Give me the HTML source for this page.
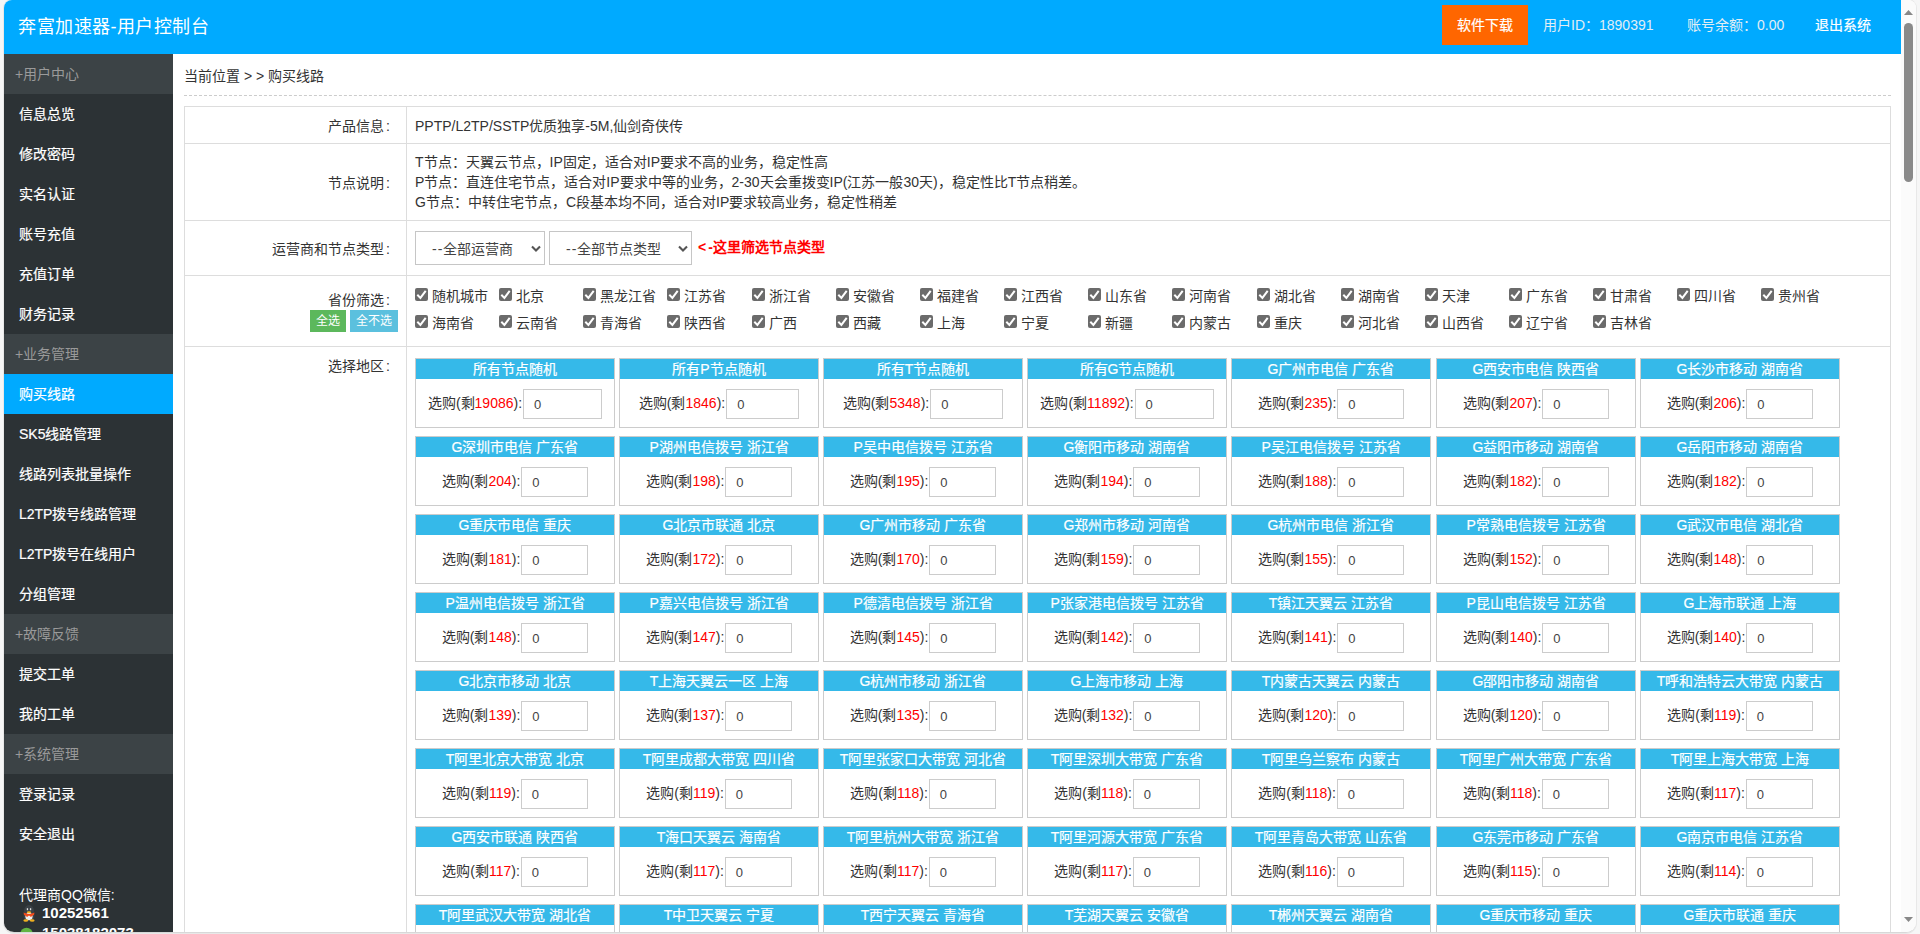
<!DOCTYPE html><html lang="zh-CN"><head><meta charset="utf-8"><style>
*{box-sizing:border-box}
html,body{margin:0;padding:0;width:1920px;height:934px;overflow:hidden;background:#f6f6f6;font-family:"Liberation Sans",sans-serif;font-size:14px;color:#333}
.win{position:absolute;left:4px;top:0;width:1912px;height:933px;border-radius:8px 8px 10px 10px;overflow:hidden;background:#fff;border-bottom:1px solid #d8d8d8;box-shadow:0 0 0 1px #e8e8e8}
.hdr{position:absolute;left:0;top:0;width:1897px;height:54px;background:#00aaff;color:#fff}
.title{position:absolute;left:14px;top:14px;font-size:18px;letter-spacing:0.5px;line-height:26px;white-space:nowrap}
.dl{position:absolute;left:1438px;top:5px;width:86px;height:40px;background:#ff6600;color:#fff;font-size:14px;line-height:41px;text-align:center;-webkit-text-stroke:0.2px #fff}
.hi{position:absolute;top:6px;line-height:39px;font-size:14px;color:#e2eef4;white-space:nowrap}
.sb{position:absolute;left:1897px;top:0;width:15px;height:932px;background:#fbfbfb}
.thumb{position:absolute;left:3px;top:23px;width:9px;height:159px;border-radius:5px;background:#8a8a8a}
.side{position:absolute;left:0;top:54px;width:169px;height:878px;background:#2c3235}
.mi{height:40px;line-height:40px;padding-left:15px;color:#fff;font-size:14px;white-space:nowrap;-webkit-text-stroke:0.2px #fff}
.mg{background:#3c4346;color:#9a9a9a;padding-left:11px;-webkit-text-stroke:0}
.ma{background:#00aaff}
.crumb{position:absolute;left:180px;top:66px;font-size:14px;line-height:20px;white-space:nowrap}
.dash{position:absolute;left:180px;top:95px;width:1707px;border-top:1px dashed #ccc}
table.t{position:absolute;left:180px;top:106px;width:1707px;border-collapse:collapse}
table.t td{border:1px solid #ddd;padding:0;vertical-align:middle}
td.lb{width:222px;text-align:right;padding-right:16px!important}
.card{position:absolute;width:200px;height:70px;border:1px solid #ccc;background:#fff}
.ch{height:20px;line-height:20px;background:#35b9e9;color:#fff;text-align:center;font-size:14px;white-space:nowrap;-webkit-text-stroke:0.2px #fff}
.cb{position:absolute;top:30px;left:0;width:198px;text-align:center;white-space:nowrap;font-size:14px}
.cb span{color:#f00}
.inp{display:inline-block;vertical-align:middle;height:30px;border:1px solid #ccc;text-align:left;padding-left:10px;line-height:30px;font-size:13px;margin-left:1px;color:#444}
.sel{position:absolute;height:34px;border:1px solid #c6c6c6;background:#fff;font-size:14px;line-height:34px;padding-left:16px;white-space:nowrap;color:#444}
.arr{position:absolute;right:2px;top:13px}
.btn{position:absolute;height:22px;line-height:23px;color:#fff;font-size:12px;text-align:center}
.ck{position:absolute;white-space:nowrap;font-size:14px}
.ck i{display:inline-block;width:13px;height:13px;background:#6b6b6b;border-radius:2px;vertical-align:0px;margin-right:4px;position:relative}
</style></head><body><div class="win">

<div class="hdr"><div class="title">奔富加速器-用户控制台</div><div class="dl">软件下载</div><div class="hi" style="left:1539px">用户ID：1890391</div><div class="hi" style="left:1683px">账号余额：0.00</div><div class="hi" style="left:1811px;color:#fff;-webkit-text-stroke:0.2px #fff">退出系统</div></div>
<div class="sb"><div class="thumb"></div><svg width="15" height="932" style="position:absolute;left:0;top:0"><path d="M3 15L7.5 10L12 15Z" fill="#888"/><path d="M3 917L7.5 922L12 917Z" fill="#888"/></svg></div>
<div class="side">
<div class="mi mg">+用户中心</div>
<div class="mi">信息总览</div>
<div class="mi">修改密码</div>
<div class="mi">实名认证</div>
<div class="mi">账号充值</div>
<div class="mi">充值订单</div>
<div class="mi">财务记录</div>
<div class="mi mg">+业务管理</div>
<div class="mi ma">购买线路</div>
<div class="mi">SK5线路管理</div>
<div class="mi">线路列表批量操作</div>
<div class="mi">L2TP拨号线路管理</div>
<div class="mi">L2TP拨号在线用户</div>
<div class="mi">分组管理</div>
<div class="mi mg">+故障反馈</div>
<div class="mi">提交工单</div>
<div class="mi">我的工单</div>
<div class="mi mg">+系统管理</div>
<div class="mi">登录记录</div>
<div class="mi">安全退出</div>
<div style="position:absolute;left:15px;top:831px;color:#fff;font-size:14px;line-height:20px;white-space:nowrap">代理商QQ微信:</div>
<svg width="14" height="17" viewBox="0 0 14 17" style="position:absolute;left:18px;top:851px"><ellipse cx="7" cy="6" rx="5" ry="6" fill="#3a4146"/><ellipse cx="7" cy="11" rx="5.5" ry="5" fill="#3a4146"/><ellipse cx="7" cy="11.5" rx="3.6" ry="3.8" fill="#eee"/><rect x="4.8" y="3.2" width="1.3" height="2" fill="#ddd"/><rect x="7.9" y="3.2" width="1.3" height="2" fill="#ddd"/><path d="M1.5 7.6Q7 10.5 12.5 7.6L12 10Q10 10.5 9 12L7 10.5L5 12Q4 10.5 2 10Z" fill="#f04a1a"/><ellipse cx="7" cy="7.3" rx="2.2" ry="1" fill="#f5b820"/><ellipse cx="3.8" cy="15.5" rx="2.4" ry="1.3" fill="#f0b020"/><ellipse cx="10.2" cy="15.5" rx="2.4" ry="1.3" fill="#f0b020"/></svg><svg width="14" height="14" viewBox="0 0 14 14" style="position:absolute;left:16px;top:873px"><circle cx="6.5" cy="7" r="6.3" fill="#62b543"/><circle cx="4.5" cy="6" r="0.9" fill="#2d3236"/><circle cx="8.5" cy="6" r="0.9" fill="#2d3236"/></svg>
<div style="position:absolute;left:38px;top:849px;color:#fff;font-size:15px;line-height:20px;font-weight:bold">10252561</div>
<div style="position:absolute;left:38px;top:869px;color:#fff;font-size:15px;line-height:20px;font-weight:bold">15038182073</div>
</div>
<div class="crumb">当前位置 &gt; &gt; 购买线路</div><div class="dash"></div>
<table class="t"><tr style="height:37px"><td class="lb">产品信息<span style="margin-left:2.5px">:</span></td><td style="padding-left:8px">PPTP/L2TP/SSTP优质独享-5M,仙剑奇侠传</td></tr><tr style="height:77px"><td class="lb">节点说明<span style="margin-left:2.5px">:</span></td><td style="padding-left:8px;line-height:20px">T节点：天翼云节点，IP固定，适合对IP要求不高的业务，稳定性高<br>P节点：直连住宅节点，适合对IP要求中等的业务，2-30天会重拨变IP(江苏一般30天)，稳定性比T节点稍差。<br>G节点：中转住宅节点，C段基本均不同，适合对IP要求较高业务，稳定性稍差</td></tr><tr style="height:55px"><td class="lb">运营商和节点类型<span style="margin-left:2.5px">:</span></td><td></td></tr><tr style="height:71px"><td class="lb" style="vertical-align:top;padding-top:14px;line-height:20px">省份筛选<span style="margin-left:2.5px">:</span></td><td></td></tr><tr style="height:700px"><td class="lb" style="vertical-align:top;padding-top:9px;line-height:20px">选择地区<span style="margin-left:2.5px">:</span></td><td></td></tr></table>
<div class="card" style="left:411px;top:358px"><div class="ch">所有节点随机</div><div class="cb">选购(剩<span>19086</span>):<div class="inp" style="width:79px">0</div></div></div>
<div class="card" style="left:615px;top:358px"><div class="ch">所有P节点随机</div><div class="cb">选购(剩<span>1846</span>):<div class="inp" style="width:73px">0</div></div></div>
<div class="card" style="left:819px;top:358px"><div class="ch">所有T节点随机</div><div class="cb">选购(剩<span>5348</span>):<div class="inp" style="width:73px">0</div></div></div>
<div class="card" style="left:1023px;top:358px"><div class="ch">所有G节点随机</div><div class="cb">选购(剩<span>11892</span>):<div class="inp" style="width:79px">0</div></div></div>
<div class="card" style="left:1227px;top:358px"><div class="ch">G广州市电信 广东省</div><div class="cb">选购(剩<span>235</span>):<div class="inp" style="width:67px">0</div></div></div>
<div class="card" style="left:1432px;top:358px"><div class="ch">G西安市电信 陕西省</div><div class="cb">选购(剩<span>207</span>):<div class="inp" style="width:67px">0</div></div></div>
<div class="card" style="left:1636px;top:358px"><div class="ch">G长沙市移动 湖南省</div><div class="cb">选购(剩<span>206</span>):<div class="inp" style="width:67px">0</div></div></div>
<div class="card" style="left:411px;top:436px"><div class="ch">G深圳市电信 广东省</div><div class="cb">选购(剩<span>204</span>):<div class="inp" style="width:67px">0</div></div></div>
<div class="card" style="left:615px;top:436px"><div class="ch">P湖州电信拨号 浙江省</div><div class="cb">选购(剩<span>198</span>):<div class="inp" style="width:67px">0</div></div></div>
<div class="card" style="left:819px;top:436px"><div class="ch">P吴中电信拨号 江苏省</div><div class="cb">选购(剩<span>195</span>):<div class="inp" style="width:67px">0</div></div></div>
<div class="card" style="left:1023px;top:436px"><div class="ch">G衡阳市移动 湖南省</div><div class="cb">选购(剩<span>194</span>):<div class="inp" style="width:67px">0</div></div></div>
<div class="card" style="left:1227px;top:436px"><div class="ch">P吴江电信拨号 江苏省</div><div class="cb">选购(剩<span>188</span>):<div class="inp" style="width:67px">0</div></div></div>
<div class="card" style="left:1432px;top:436px"><div class="ch">G益阳市移动 湖南省</div><div class="cb">选购(剩<span>182</span>):<div class="inp" style="width:67px">0</div></div></div>
<div class="card" style="left:1636px;top:436px"><div class="ch">G岳阳市移动 湖南省</div><div class="cb">选购(剩<span>182</span>):<div class="inp" style="width:67px">0</div></div></div>
<div class="card" style="left:411px;top:514px"><div class="ch">G重庆市电信 重庆</div><div class="cb">选购(剩<span>181</span>):<div class="inp" style="width:67px">0</div></div></div>
<div class="card" style="left:615px;top:514px"><div class="ch">G北京市联通 北京</div><div class="cb">选购(剩<span>172</span>):<div class="inp" style="width:67px">0</div></div></div>
<div class="card" style="left:819px;top:514px"><div class="ch">G广州市移动 广东省</div><div class="cb">选购(剩<span>170</span>):<div class="inp" style="width:67px">0</div></div></div>
<div class="card" style="left:1023px;top:514px"><div class="ch">G郑州市移动 河南省</div><div class="cb">选购(剩<span>159</span>):<div class="inp" style="width:67px">0</div></div></div>
<div class="card" style="left:1227px;top:514px"><div class="ch">G杭州市电信 浙江省</div><div class="cb">选购(剩<span>155</span>):<div class="inp" style="width:67px">0</div></div></div>
<div class="card" style="left:1432px;top:514px"><div class="ch">P常熟电信拨号 江苏省</div><div class="cb">选购(剩<span>152</span>):<div class="inp" style="width:67px">0</div></div></div>
<div class="card" style="left:1636px;top:514px"><div class="ch">G武汉市电信 湖北省</div><div class="cb">选购(剩<span>148</span>):<div class="inp" style="width:67px">0</div></div></div>
<div class="card" style="left:411px;top:592px"><div class="ch">P温州电信拨号 浙江省</div><div class="cb">选购(剩<span>148</span>):<div class="inp" style="width:67px">0</div></div></div>
<div class="card" style="left:615px;top:592px"><div class="ch">P嘉兴电信拨号 浙江省</div><div class="cb">选购(剩<span>147</span>):<div class="inp" style="width:67px">0</div></div></div>
<div class="card" style="left:819px;top:592px"><div class="ch">P德清电信拨号 浙江省</div><div class="cb">选购(剩<span>145</span>):<div class="inp" style="width:67px">0</div></div></div>
<div class="card" style="left:1023px;top:592px"><div class="ch">P张家港电信拨号 江苏省</div><div class="cb">选购(剩<span>142</span>):<div class="inp" style="width:67px">0</div></div></div>
<div class="card" style="left:1227px;top:592px"><div class="ch">T镇江天翼云 江苏省</div><div class="cb">选购(剩<span>141</span>):<div class="inp" style="width:67px">0</div></div></div>
<div class="card" style="left:1432px;top:592px"><div class="ch">P昆山电信拨号 江苏省</div><div class="cb">选购(剩<span>140</span>):<div class="inp" style="width:67px">0</div></div></div>
<div class="card" style="left:1636px;top:592px"><div class="ch">G上海市联通 上海</div><div class="cb">选购(剩<span>140</span>):<div class="inp" style="width:67px">0</div></div></div>
<div class="card" style="left:411px;top:670px"><div class="ch">G北京市移动 北京</div><div class="cb">选购(剩<span>139</span>):<div class="inp" style="width:67px">0</div></div></div>
<div class="card" style="left:615px;top:670px"><div class="ch">T上海天翼云一区 上海</div><div class="cb">选购(剩<span>137</span>):<div class="inp" style="width:67px">0</div></div></div>
<div class="card" style="left:819px;top:670px"><div class="ch">G杭州市移动 浙江省</div><div class="cb">选购(剩<span>135</span>):<div class="inp" style="width:67px">0</div></div></div>
<div class="card" style="left:1023px;top:670px"><div class="ch">G上海市移动 上海</div><div class="cb">选购(剩<span>132</span>):<div class="inp" style="width:67px">0</div></div></div>
<div class="card" style="left:1227px;top:670px"><div class="ch">T内蒙古天翼云 内蒙古</div><div class="cb">选购(剩<span>120</span>):<div class="inp" style="width:67px">0</div></div></div>
<div class="card" style="left:1432px;top:670px"><div class="ch">G邵阳市移动 湖南省</div><div class="cb">选购(剩<span>120</span>):<div class="inp" style="width:67px">0</div></div></div>
<div class="card" style="left:1636px;top:670px"><div class="ch">T呼和浩特云大带宽 内蒙古</div><div class="cb">选购(剩<span>119</span>):<div class="inp" style="width:67px">0</div></div></div>
<div class="card" style="left:411px;top:748px"><div class="ch">T阿里北京大带宽 北京</div><div class="cb">选购(剩<span>119</span>):<div class="inp" style="width:67px">0</div></div></div>
<div class="card" style="left:615px;top:748px"><div class="ch">T阿里成都大带宽 四川省</div><div class="cb">选购(剩<span>119</span>):<div class="inp" style="width:67px">0</div></div></div>
<div class="card" style="left:819px;top:748px"><div class="ch">T阿里张家口大带宽 河北省</div><div class="cb">选购(剩<span>118</span>):<div class="inp" style="width:67px">0</div></div></div>
<div class="card" style="left:1023px;top:748px"><div class="ch">T阿里深圳大带宽 广东省</div><div class="cb">选购(剩<span>118</span>):<div class="inp" style="width:67px">0</div></div></div>
<div class="card" style="left:1227px;top:748px"><div class="ch">T阿里乌兰察布 内蒙古</div><div class="cb">选购(剩<span>118</span>):<div class="inp" style="width:67px">0</div></div></div>
<div class="card" style="left:1432px;top:748px"><div class="ch">T阿里广州大带宽 广东省</div><div class="cb">选购(剩<span>118</span>):<div class="inp" style="width:67px">0</div></div></div>
<div class="card" style="left:1636px;top:748px"><div class="ch">T阿里上海大带宽 上海</div><div class="cb">选购(剩<span>117</span>):<div class="inp" style="width:67px">0</div></div></div>
<div class="card" style="left:411px;top:826px"><div class="ch">G西安市联通 陕西省</div><div class="cb">选购(剩<span>117</span>):<div class="inp" style="width:67px">0</div></div></div>
<div class="card" style="left:615px;top:826px"><div class="ch">T海口天翼云 海南省</div><div class="cb">选购(剩<span>117</span>):<div class="inp" style="width:67px">0</div></div></div>
<div class="card" style="left:819px;top:826px"><div class="ch">T阿里杭州大带宽 浙江省</div><div class="cb">选购(剩<span>117</span>):<div class="inp" style="width:67px">0</div></div></div>
<div class="card" style="left:1023px;top:826px"><div class="ch">T阿里河源大带宽 广东省</div><div class="cb">选购(剩<span>117</span>):<div class="inp" style="width:67px">0</div></div></div>
<div class="card" style="left:1227px;top:826px"><div class="ch">T阿里青岛大带宽 山东省</div><div class="cb">选购(剩<span>116</span>):<div class="inp" style="width:67px">0</div></div></div>
<div class="card" style="left:1432px;top:826px"><div class="ch">G东莞市移动 广东省</div><div class="cb">选购(剩<span>115</span>):<div class="inp" style="width:67px">0</div></div></div>
<div class="card" style="left:1636px;top:826px"><div class="ch">G南京市电信 江苏省</div><div class="cb">选购(剩<span>114</span>):<div class="inp" style="width:67px">0</div></div></div>
<div class="card" style="left:411px;top:904px"><div class="ch">T阿里武汉大带宽 湖北省</div><div class="cb">选购(剩<span>113</span>):<div class="inp" style="width:67px">0</div></div></div>
<div class="card" style="left:615px;top:904px"><div class="ch">T中卫天翼云 宁夏</div><div class="cb">选购(剩<span>113</span>):<div class="inp" style="width:67px">0</div></div></div>
<div class="card" style="left:819px;top:904px"><div class="ch">T西宁天翼云 青海省</div><div class="cb">选购(剩<span>113</span>):<div class="inp" style="width:67px">0</div></div></div>
<div class="card" style="left:1023px;top:904px"><div class="ch">T芜湖天翼云 安徽省</div><div class="cb">选购(剩<span>113</span>):<div class="inp" style="width:67px">0</div></div></div>
<div class="card" style="left:1227px;top:904px"><div class="ch">T郴州天翼云 湖南省</div><div class="cb">选购(剩<span>113</span>):<div class="inp" style="width:67px">0</div></div></div>
<div class="card" style="left:1432px;top:904px"><div class="ch">G重庆市移动 重庆</div><div class="cb">选购(剩<span>113</span>):<div class="inp" style="width:67px">0</div></div></div>
<div class="card" style="left:1636px;top:904px"><div class="ch">G重庆市联通 重庆</div><div class="cb">选购(剩<span>113</span>):<div class="inp" style="width:67px">0</div></div></div>
<div class="sel" style="left:411px;top:231px;width:130px"><span style="letter-spacing:1px">--</span>全部运营商<svg class="arr" width="12" height="8" viewBox="0 0 12 8"><path d="M2 1.5L6 5.5L10 1.5" fill="none" stroke="#555" stroke-width="2.1"/></svg></div>
<div class="sel" style="left:545px;top:231px;width:143px"><span style="letter-spacing:1px">--</span>全部节点类型<svg class="arr" width="12" height="8" viewBox="0 0 12 8"><path d="M2 1.5L6 5.5L10 1.5" fill="none" stroke="#555" stroke-width="2.1"/></svg></div>
<div style="position:absolute;left:694px;top:237px;color:#f00;font-weight:bold;font-size:14px;line-height:20px;white-space:nowrap"><span style="margin-right:2px">&lt;</span>-这里筛选节点类型</div>
<div class="ck" style="left:411px;top:285px"><i><svg width="13" height="13" viewBox="0 0 13 13" style="position:absolute;left:0;top:0"><path d="M2.3 6.8L5.4 9.9L10.7 2.9" fill="none" stroke="#fff" stroke-width="2"/></svg></i>随机城市</div>
<div class="ck" style="left:495px;top:285px"><i><svg width="13" height="13" viewBox="0 0 13 13" style="position:absolute;left:0;top:0"><path d="M2.3 6.8L5.4 9.9L10.7 2.9" fill="none" stroke="#fff" stroke-width="2"/></svg></i>北京</div>
<div class="ck" style="left:579px;top:285px"><i><svg width="13" height="13" viewBox="0 0 13 13" style="position:absolute;left:0;top:0"><path d="M2.3 6.8L5.4 9.9L10.7 2.9" fill="none" stroke="#fff" stroke-width="2"/></svg></i>黑龙江省</div>
<div class="ck" style="left:663px;top:285px"><i><svg width="13" height="13" viewBox="0 0 13 13" style="position:absolute;left:0;top:0"><path d="M2.3 6.8L5.4 9.9L10.7 2.9" fill="none" stroke="#fff" stroke-width="2"/></svg></i>江苏省</div>
<div class="ck" style="left:748px;top:285px"><i><svg width="13" height="13" viewBox="0 0 13 13" style="position:absolute;left:0;top:0"><path d="M2.3 6.8L5.4 9.9L10.7 2.9" fill="none" stroke="#fff" stroke-width="2"/></svg></i>浙江省</div>
<div class="ck" style="left:832px;top:285px"><i><svg width="13" height="13" viewBox="0 0 13 13" style="position:absolute;left:0;top:0"><path d="M2.3 6.8L5.4 9.9L10.7 2.9" fill="none" stroke="#fff" stroke-width="2"/></svg></i>安徽省</div>
<div class="ck" style="left:916px;top:285px"><i><svg width="13" height="13" viewBox="0 0 13 13" style="position:absolute;left:0;top:0"><path d="M2.3 6.8L5.4 9.9L10.7 2.9" fill="none" stroke="#fff" stroke-width="2"/></svg></i>福建省</div>
<div class="ck" style="left:1000px;top:285px"><i><svg width="13" height="13" viewBox="0 0 13 13" style="position:absolute;left:0;top:0"><path d="M2.3 6.8L5.4 9.9L10.7 2.9" fill="none" stroke="#fff" stroke-width="2"/></svg></i>江西省</div>
<div class="ck" style="left:1084px;top:285px"><i><svg width="13" height="13" viewBox="0 0 13 13" style="position:absolute;left:0;top:0"><path d="M2.3 6.8L5.4 9.9L10.7 2.9" fill="none" stroke="#fff" stroke-width="2"/></svg></i>山东省</div>
<div class="ck" style="left:1168px;top:285px"><i><svg width="13" height="13" viewBox="0 0 13 13" style="position:absolute;left:0;top:0"><path d="M2.3 6.8L5.4 9.9L10.7 2.9" fill="none" stroke="#fff" stroke-width="2"/></svg></i>河南省</div>
<div class="ck" style="left:1253px;top:285px"><i><svg width="13" height="13" viewBox="0 0 13 13" style="position:absolute;left:0;top:0"><path d="M2.3 6.8L5.4 9.9L10.7 2.9" fill="none" stroke="#fff" stroke-width="2"/></svg></i>湖北省</div>
<div class="ck" style="left:1337px;top:285px"><i><svg width="13" height="13" viewBox="0 0 13 13" style="position:absolute;left:0;top:0"><path d="M2.3 6.8L5.4 9.9L10.7 2.9" fill="none" stroke="#fff" stroke-width="2"/></svg></i>湖南省</div>
<div class="ck" style="left:1421px;top:285px"><i><svg width="13" height="13" viewBox="0 0 13 13" style="position:absolute;left:0;top:0"><path d="M2.3 6.8L5.4 9.9L10.7 2.9" fill="none" stroke="#fff" stroke-width="2"/></svg></i>天津</div>
<div class="ck" style="left:1505px;top:285px"><i><svg width="13" height="13" viewBox="0 0 13 13" style="position:absolute;left:0;top:0"><path d="M2.3 6.8L5.4 9.9L10.7 2.9" fill="none" stroke="#fff" stroke-width="2"/></svg></i>广东省</div>
<div class="ck" style="left:1589px;top:285px"><i><svg width="13" height="13" viewBox="0 0 13 13" style="position:absolute;left:0;top:0"><path d="M2.3 6.8L5.4 9.9L10.7 2.9" fill="none" stroke="#fff" stroke-width="2"/></svg></i>甘肃省</div>
<div class="ck" style="left:1673px;top:285px"><i><svg width="13" height="13" viewBox="0 0 13 13" style="position:absolute;left:0;top:0"><path d="M2.3 6.8L5.4 9.9L10.7 2.9" fill="none" stroke="#fff" stroke-width="2"/></svg></i>四川省</div>
<div class="ck" style="left:1757px;top:285px"><i><svg width="13" height="13" viewBox="0 0 13 13" style="position:absolute;left:0;top:0"><path d="M2.3 6.8L5.4 9.9L10.7 2.9" fill="none" stroke="#fff" stroke-width="2"/></svg></i>贵州省</div>
<div class="ck" style="left:411px;top:312px"><i><svg width="13" height="13" viewBox="0 0 13 13" style="position:absolute;left:0;top:0"><path d="M2.3 6.8L5.4 9.9L10.7 2.9" fill="none" stroke="#fff" stroke-width="2"/></svg></i>海南省</div>
<div class="ck" style="left:495px;top:312px"><i><svg width="13" height="13" viewBox="0 0 13 13" style="position:absolute;left:0;top:0"><path d="M2.3 6.8L5.4 9.9L10.7 2.9" fill="none" stroke="#fff" stroke-width="2"/></svg></i>云南省</div>
<div class="ck" style="left:579px;top:312px"><i><svg width="13" height="13" viewBox="0 0 13 13" style="position:absolute;left:0;top:0"><path d="M2.3 6.8L5.4 9.9L10.7 2.9" fill="none" stroke="#fff" stroke-width="2"/></svg></i>青海省</div>
<div class="ck" style="left:663px;top:312px"><i><svg width="13" height="13" viewBox="0 0 13 13" style="position:absolute;left:0;top:0"><path d="M2.3 6.8L5.4 9.9L10.7 2.9" fill="none" stroke="#fff" stroke-width="2"/></svg></i>陕西省</div>
<div class="ck" style="left:748px;top:312px"><i><svg width="13" height="13" viewBox="0 0 13 13" style="position:absolute;left:0;top:0"><path d="M2.3 6.8L5.4 9.9L10.7 2.9" fill="none" stroke="#fff" stroke-width="2"/></svg></i>广西</div>
<div class="ck" style="left:832px;top:312px"><i><svg width="13" height="13" viewBox="0 0 13 13" style="position:absolute;left:0;top:0"><path d="M2.3 6.8L5.4 9.9L10.7 2.9" fill="none" stroke="#fff" stroke-width="2"/></svg></i>西藏</div>
<div class="ck" style="left:916px;top:312px"><i><svg width="13" height="13" viewBox="0 0 13 13" style="position:absolute;left:0;top:0"><path d="M2.3 6.8L5.4 9.9L10.7 2.9" fill="none" stroke="#fff" stroke-width="2"/></svg></i>上海</div>
<div class="ck" style="left:1000px;top:312px"><i><svg width="13" height="13" viewBox="0 0 13 13" style="position:absolute;left:0;top:0"><path d="M2.3 6.8L5.4 9.9L10.7 2.9" fill="none" stroke="#fff" stroke-width="2"/></svg></i>宁夏</div>
<div class="ck" style="left:1084px;top:312px"><i><svg width="13" height="13" viewBox="0 0 13 13" style="position:absolute;left:0;top:0"><path d="M2.3 6.8L5.4 9.9L10.7 2.9" fill="none" stroke="#fff" stroke-width="2"/></svg></i>新疆</div>
<div class="ck" style="left:1168px;top:312px"><i><svg width="13" height="13" viewBox="0 0 13 13" style="position:absolute;left:0;top:0"><path d="M2.3 6.8L5.4 9.9L10.7 2.9" fill="none" stroke="#fff" stroke-width="2"/></svg></i>内蒙古</div>
<div class="ck" style="left:1253px;top:312px"><i><svg width="13" height="13" viewBox="0 0 13 13" style="position:absolute;left:0;top:0"><path d="M2.3 6.8L5.4 9.9L10.7 2.9" fill="none" stroke="#fff" stroke-width="2"/></svg></i>重庆</div>
<div class="ck" style="left:1337px;top:312px"><i><svg width="13" height="13" viewBox="0 0 13 13" style="position:absolute;left:0;top:0"><path d="M2.3 6.8L5.4 9.9L10.7 2.9" fill="none" stroke="#fff" stroke-width="2"/></svg></i>河北省</div>
<div class="ck" style="left:1421px;top:312px"><i><svg width="13" height="13" viewBox="0 0 13 13" style="position:absolute;left:0;top:0"><path d="M2.3 6.8L5.4 9.9L10.7 2.9" fill="none" stroke="#fff" stroke-width="2"/></svg></i>山西省</div>
<div class="ck" style="left:1505px;top:312px"><i><svg width="13" height="13" viewBox="0 0 13 13" style="position:absolute;left:0;top:0"><path d="M2.3 6.8L5.4 9.9L10.7 2.9" fill="none" stroke="#fff" stroke-width="2"/></svg></i>辽宁省</div>
<div class="ck" style="left:1589px;top:312px"><i><svg width="13" height="13" viewBox="0 0 13 13" style="position:absolute;left:0;top:0"><path d="M2.3 6.8L5.4 9.9L10.7 2.9" fill="none" stroke="#fff" stroke-width="2"/></svg></i>吉林省</div>
<div class="btn" style="left:306px;top:310px;width:36px;background:#5cb85c">全选</div>
<div class="btn" style="left:346px;top:310px;width:48px;background:#5bc0de">全不选</div>
</div></body></html>
